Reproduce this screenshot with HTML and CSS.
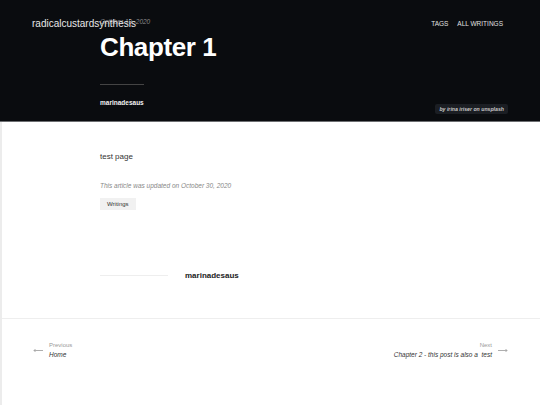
FILE: index.html
```html
<!DOCTYPE html>
<html lang="en">
<head>
    <meta charset="UTF-8">
    <meta name="viewport" content="width=device-width, initial-scale=1.0">
    <title>Chapter 1</title>
    <link rel="stylesheet" href="styles.css">
</head>
<body>
    <header class="site-head">
        <a class="site-title" href="#">radicalcustardsynthesis</a>
        <nav class="site-nav">
            <a href="#">Tags</a>
            <a href="#">All Writings</a>
        </nav>
    </header>

    <section class="hero">
        <div class="hero-inner">
            <p class="post-date">October 19, 2020</p>
            <h1 class="post-title">Chapter 1</h1>
            <hr class="hero-rule">
            <p class="post-author">marinadesaus</p>
        </div>
        <span class="photo-credit">by irina iriser on unsplash</span>
    </section>

    <main class="page">
        <article class="post-body">
            <p class="post-text">test page</p>
            <p class="post-updated">This article was updated on October 30, 2020</p>
            <a class="tag" href="#">Writings</a>
        </article>

        <div class="author-row">
            <span class="author-line"></span>
            <span class="author-name">marinadesaus</span>
        </div>

        <nav class="post-nav">
            <a class="nav-link prev" href="#">
                <svg class="arrow" width="10" height="5" viewBox="0 0 10 5"><path d="M10 2.5H1M2.5 1 1 2.5 2.5 4" fill="none" stroke="#999" stroke-width="0.8"/></svg>
                <span class="nav-text">
                    <span class="nav-label">Previous</span>
                    <span class="nav-title">Home</span>
                </span>
            </a>
            <a class="nav-link next" href="#">
                <span class="nav-text">
                    <span class="nav-label">Next</span>
                    <span class="nav-title">Chapter 2 - this post is also a&nbsp; test</span>
                </span>
                <svg class="arrow" width="10" height="5" viewBox="0 0 10 5"><path d="M0 2.5H9M7.5 1 9 2.5 7.5 4" fill="none" stroke="#999" stroke-width="0.8"/></svg>
            </a>
        </nav>
    </main>
</body>
</html>
```

FILE: styles.css
```css
body {
    margin: 0;
    font-family: "Liberation Sans", Arial, sans-serif;
    background: #fff;
    color: #222;
}

a {
    color: inherit;
    text-decoration: none;
}

/* top bar sits over the hero */
.site-head {
    position: absolute;
    top: 0;
    left: 0;
    right: 0;
    height: 46px;
    display: flex;
    align-items: center;
    justify-content: space-between;
    padding: 0 37px 0 32px;
    z-index: 2;
}

.site-title {
    font-size: 10px;
    color: #e8e8e8;
}

.site-nav {
    display: flex;
    gap: 9px;
}

.site-nav a {
    font-size: 6.5px;
    text-transform: uppercase;
    color: #e0e0e0;
}

.hero {
    position: relative;
    height: 122px;
    box-sizing: border-box;
    background: #0a0c0f;
    border-bottom: 1px solid #6d6f72;
}

.hero-inner {
    padding: 18px 0 0 100px;
}

.post-date {
    margin: 0;
    font-size: 6.5px;
    font-style: italic;
    color: #888;
    line-height: 8px;
}

.post-title {
    margin: 6px 0 0;
    font-size: 26px;
    letter-spacing: -0.4px;
    line-height: 30px;
    color: #fff;
}

.hero-rule {
    width: 44px;
    margin: 22px 0 0;
    border: 0;
    border-top: 1px solid #444;
}

.post-author {
    margin: 14px 0 0;
    font-size: 6.5px;
    font-weight: bold;
    color: #f2f2f2;
}

.photo-credit {
    position: absolute;
    right: 32px;
    bottom: 7px;
    padding: 2px 4px;
    border-radius: 2px;
    background: #1b1e23;
    font-size: 5.2px;
    font-style: italic;
    font-weight: bold;
    color: #c8c8c8;
}

.page {
    border-left: 2px solid #ececec;
    min-height: 283px;
}

.post-body {
    padding: 29px 0 0 98px;
}

.post-text {
    margin: 0;
    font-size: 8px;
    line-height: 12px;
    color: #333;
}

.post-updated {
    margin: 19px 0 0;
    font-size: 6.5px;
    font-style: italic;
    color: #888;
}

.tag {
    display: inline-block;
    margin-top: 9px;
    padding: 2px 7px;
    background: #f1f1f1;
    font-size: 6px;
    line-height: 8px;
    color: #333;
}

.author-row {
    display: flex;
    align-items: center;
    gap: 17px;
    padding: 61px 0 0 98px;
}

.author-line {
    width: 68px;
    border-top: 1px solid #eee;
}

.author-name {
    font-size: 8px;
    font-weight: bold;
    color: #222;
}

.post-nav {
    margin-top: 38px;
    border-top: 1px solid #eee;
    display: flex;
    justify-content: space-between;
    padding: 22px 32px 0 31px;
}

.nav-link {
    display: flex;
    align-items: center;
    gap: 6px;
}

.nav-text {
    display: flex;
    flex-direction: column;
}

.next .nav-text {
    align-items: flex-end;
}

.nav-label {
    font-size: 6px;
    color: #999;
    line-height: 9px;
}

.nav-title {
    font-size: 6.5px;
    font-style: italic;
    color: #333;
    line-height: 10px;
}
```
